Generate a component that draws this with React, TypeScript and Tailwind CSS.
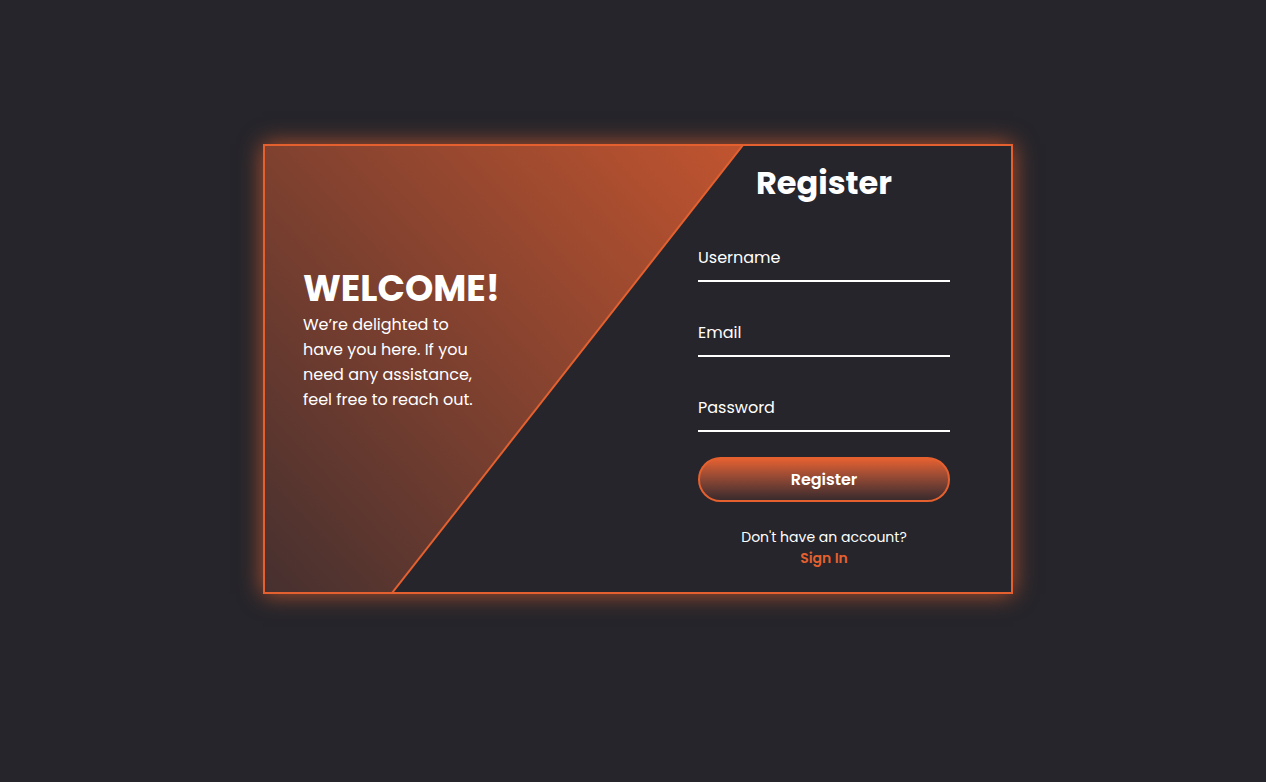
import React from "react";

function Field({ label }: { label: string }) {
  return (
    <div className="relative h-[50px] w-full border-b-2 border-white">
      <span className="absolute left-0 top-[14px] text-[16px] leading-[24px] text-white">{label}</span>
    </div>
  );
}

export default function App() {
  return (
    <div
      className="min-h-[782px] w-full bg-[#25252b] flex justify-center pt-[144px] pl-[10px]"
      style={{ fontFamily: "Poppins, Inter, 'Noto Sans', sans-serif" }}
    >
      <div className="relative w-[750px] h-[450px] border-2 border-[#e4602f] shadow-[0_0_22px_rgba(228,96,47,0.75)] overflow-hidden">
        <svg
          className="absolute inset-0"
          width="746"
          height="446"
          viewBox="0 0 746 446"
          aria-hidden="true"
        >
          <defs>
            <linearGradient id="g" x1="0" y1="446" x2="477" y2="0" gradientUnits="userSpaceOnUse">
              <stop offset="0" stopColor="#46302f" />
              <stop offset="1" stopColor="#c1542f" />
            </linearGradient>
          </defs>
          <polygon points="0,0 477,0 127,446 0,446" fill="url(#g)" />
          <line x1="478" y1="-1" x2="127" y2="447" stroke="#e4602f" strokeWidth="2" />
        </svg>
        <div className="relative flex h-full">
          <div className="w-1/2 pl-[38px] pt-[121px] text-white">
            <h2 className="text-[36px] leading-[44px] font-bold">WELCOME!</h2>
            <p className="mt-[1px] w-[180px] text-[16px] leading-[25px] text-white">
              We’re delighted to have you here. If you need any assistance, feel free to reach out.
            </p>
          </div>
          <div className="w-1/2 flex flex-col items-center pt-[16px] pr-[1px]">
            <h2 className="text-[32px] leading-[42px] font-bold text-white">Register</h2>
            <div className="mt-[28px] w-[252px] flex flex-col gap-[25px]">
              <Field label="Username" />
              <Field label="Email" />
              <Field label="Password" />
            </div>
            <button className="mt-[25px] w-[252px] h-[45px] rounded-full border-2 border-[#e4602f] bg-gradient-to-b from-[#e4602f] to-[#3a2a2c] text-white text-[16px] font-semibold">
              Register
            </button>
            <p className="mt-[25px] text-[14px] leading-[20px] text-white">Don't have an account?</p>
            <a className="mt-[1px] text-[14px] leading-[20px] font-semibold text-[#e4602f]">Sign In</a>
          </div>
        </div>
      </div>
    </div>
  );
}
